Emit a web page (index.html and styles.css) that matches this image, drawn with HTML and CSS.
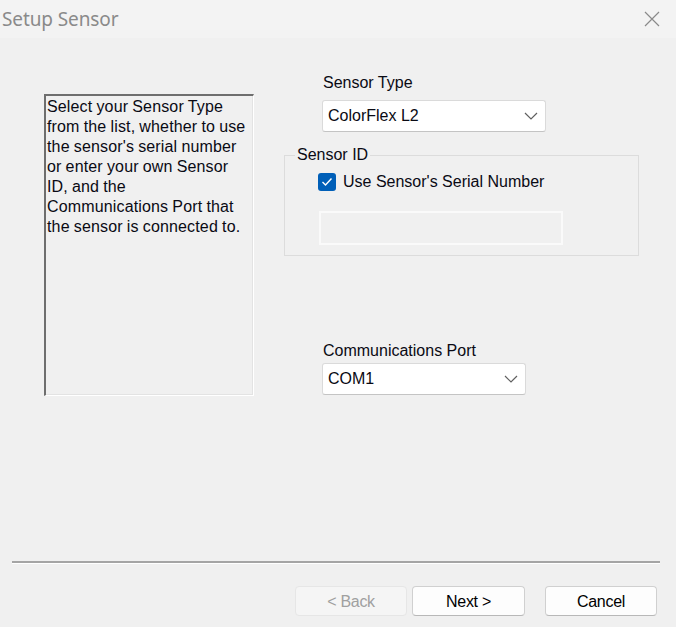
FILE: index.html
```html
<!DOCTYPE html>
<html>
<head>
<meta charset="utf-8">
<link rel="stylesheet" href="styles.css">
</head>
<body>
<div class="dialog">
  <div class="titlebar">
    <span class="title">Setup Sensor</span>
    <svg class="close" width="16" height="16" viewBox="0 0 16 16"><path d="M1 1 L15 15 M15 1 L1 15" stroke="#8a8a8a" stroke-width="1.2" fill="none"/></svg>
  </div>
  <div class="content">
    <div class="help">Select your Sensor Type<br>from the list, whether to use<br>the sensor's serial number<br>or enter your own Sensor<br>ID, and the<br>Communications Port that<br>the sensor is connected to.</div>
    <div class="fields">
      <div class="field type-field">
        <div class="label">Sensor Type</div>
        <div class="select wide">
          <span>ColorFlex L2</span>
          <svg width="14" height="8" viewBox="0 0 14 8"><polyline points="1,1 7,7 13,1" stroke="#606060" stroke-width="1.2" fill="none"/></svg>
        </div>
      </div>
      <fieldset class="group">
        <legend>Sensor ID</legend>
        <div class="check-row">
          <span class="checkbox"><svg width="12" height="10" viewBox="0 0 12 10"><polyline points="1.5,5 4.5,8 10.5,1.5" stroke="#fff" stroke-width="1.4" fill="none"/></svg></span>
          <span class="check-label">Use Sensor's Serial Number</span>
        </div>
        <div class="idbox"></div>
      </fieldset>
      <div class="field port-field">
        <div class="label">Communications Port</div>
        <div class="select narrow">
          <span>COM1</span>
          <svg width="14" height="8" viewBox="0 0 14 8"><polyline points="1,1 7,7 13,1" stroke="#606060" stroke-width="1.2" fill="none"/></svg>
        </div>
      </div>
    </div>
  </div>
  <div class="separator"></div>
  <div class="buttons">
    <button class="btn disabled">&lt; Back</button>
    <button class="btn next">Next &gt;</button>
    <button class="btn cancel">Cancel</button>
  </div>
</div>
</body>
</html>
```
FILE: styles.css
```css
html, body {
  margin: 0;
  padding: 0;
}
body {
  width: 676px;
  height: 627px;
  background: #f0f0f0;
  font-family: "Liberation Sans", Arial, sans-serif;
  font-size: 16px;
  color: #0a0a14;
  overflow: hidden;
}
.dialog {
  display: flex;
  flex-direction: column;
  height: 627px;
}
.titlebar {
  height: 38px;
  background: #f3f3f3;
  display: flex;
  align-items: center;
  justify-content: space-between;
  padding: 0 16px 0 2px;
  box-sizing: border-box;
}
.title {
  font-family: "Noto Sans", "Open Sans", sans-serif;
  font-size: 19px;
  color: #8a8a8a;
  letter-spacing: -0.1px;
}
.close {
  display: block;
}
.content {
  height: 523px;
  display: flex;
  align-items: flex-start;
}
.help {
  margin: 56px 0 0 44px;
  width: 210px;
  height: 302px;
  box-sizing: border-box;
  border-style: solid;
  border-width: 2px 1px 1px 2px;
  border-color: #6e6e6e #ffffff #ffffff #6e6e6e;
  box-shadow: inset -1px -1px 0 #e3e3e3;
  padding: 1px 0 0 1px;
  line-height: 20px;
  white-space: nowrap;
  overflow: hidden;
  letter-spacing: 0.15px;
  word-spacing: -0.5px;
}
.fields {
  margin-left: 30px;
  width: 355px;
  display: flex;
  flex-direction: column;
}
.field {
  padding-left: 38px;
}
.type-field {
  margin-top: 35px;
}
.label {
  line-height: 20px;
  padding-left: 1px;
}
.select {
  margin-top: 7px;
  height: 32px;
  box-sizing: border-box;
  background: #fff;
  border: 1px solid #dadada;
  border-bottom-color: #c4c4c4;
  border-radius: 3px;
  display: flex;
  align-items: center;
  justify-content: space-between;
  padding: 0 7px 0 5px;
}
.select.wide {
  width: 224px;
}
.select.narrow {
  width: 204px;
  margin-top: 2px;
}
.group {
  margin: 13px 0 0 0;
  padding: 0 0 12px 0;
  min-inline-size: 0;
  border: 1px solid #dcdcdc;
  height: 111px;
  box-sizing: border-box;
}
.group legend {
  margin-left: 10px;
  padding: 0 2px;
  line-height: 20px;
}
.check-row {
  display: flex;
  align-items: center;
  margin: 7px 0 0 33px;
}
.checkbox {
  width: 18px;
  height: 18px;
  border-radius: 3px;
  background: #005fb8;
  display: flex;
  align-items: center;
  justify-content: center;
}
.check-label {
  margin-left: 7px;
  line-height: 20px;
}
.idbox {
  margin: 19px 0 0 34px;
  width: 244px;
  height: 34px;
  box-sizing: border-box;
  border: 2px solid #fafafa;
  background: #f0f0f0;
}
.port-field {
  margin-top: 85px;
}
.separator {
  margin-left: 12px;
  width: 648px;
  border-top: 2px solid #a5a5a5;
  background: #fff;
  box-sizing: content-box;
  height: 1px;
}
.buttons {
  margin-top: 22px;
  display: flex;
  justify-content: flex-end;
  padding-right: 19px;
}
.btn {
  height: 30px;
  width: 113px;
  font-family: "Liberation Sans", Arial, sans-serif;
  font-size: 16px;
  background: #fdfdfd;
  border: 1px solid #d0d0d0;
  border-bottom-color: #b8b8b8;
  border-radius: 4px;
  color: #000;
  padding: 2px 0 0 0;
  letter-spacing: -0.3px;
}
.btn.disabled {
  background: #f5f5f5;
  border-color: #e6e6e6;
  color: #a0a0a0;
  width: 112px;
}
.btn.next {
  margin-left: 5px;
}
.btn.cancel {
  margin-left: 20px;
  width: 112px;
}
```
